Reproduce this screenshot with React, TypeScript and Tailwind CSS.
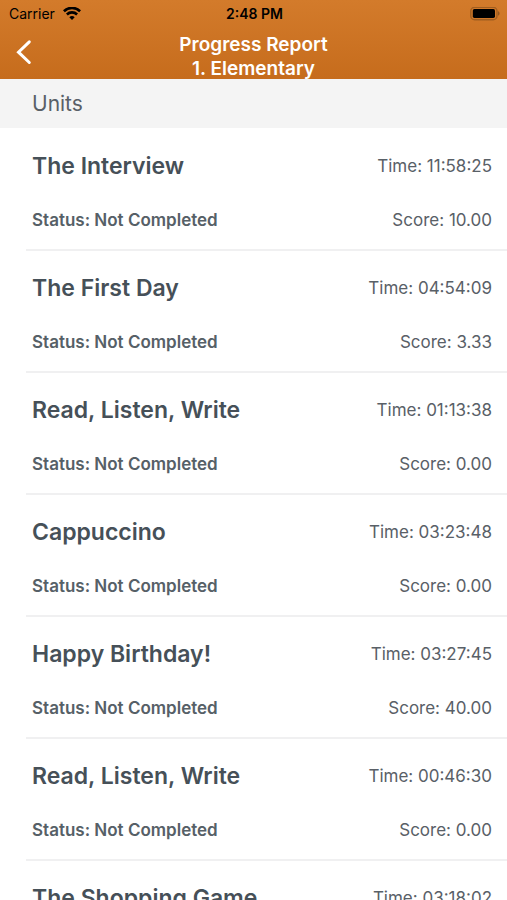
type Unit = { id: number; title: string; time: string; score: string };

const units: Unit[] = [
  { id: 1, title: "The Interview", time: "11:58:25", score: "10.00" },
  { id: 2, title: "The First Day", time: "04:54:09", score: "3.33" },
  { id: 3, title: "Read, Listen, Write", time: "01:13:38", score: "0.00" },
  { id: 4, title: "Cappuccino", time: "03:23:48", score: "0.00" },
  { id: 5, title: "Happy Birthday!", time: "03:27:45", score: "40.00" },
  { id: 6, title: "Read, Listen, Write", time: "00:46:30", score: "0.00" },
  { id: 7, title: "The Shopping Game", time: "03:18:02", score: "0.00" },
];

function StatusBar() {
  return (
    <div className="grid h-7 grid-cols-3 items-center pl-[9px] pr-[7px] text-sm text-black">
      <div className="flex items-center gap-2">
        <span>Carrier</span>
        <svg className="h-[14px] w-[18px]" viewBox="0 0 18 14" fill="none" stroke="currentColor" strokeWidth="2.6" aria-hidden="true">
          <path d="M0.9 4.2a11.6 11.6 0 0 1 16.2 0" />
          <path d="M3.9 7.5a7.3 7.3 0 0 1 10.2 0" />
          <path d="M9 12.9 6.3 10.2a3.9 3.9 0 0 1 5.4 0Z" fill="currentColor" stroke="none" />
        </svg>
      </div>
      <span className="text-center font-semibold">2:48 PM</span>
      <svg className="h-[14px] w-[30px] justify-self-end" viewBox="0 0 30 14" aria-hidden="true">
        <rect x="0.8" y="0.3" width="26.2" height="12.4" rx="3.8" fill="none" stroke="#a05e20" strokeWidth="1.4" />
        <rect x="2.8" y="2.1" width="22.2" height="8.8" rx="1.6" fill="#000" />
        <path d="M28.1 4.3c1.9.7 1.9 3.7 0 4.4Z" fill="#8a5220" />
      </svg>
    </div>
  );
}

function UnitRow({ unit }: { unit: Unit }) {
  return (
    <li className="ml-[26px] border-b-2 border-[#f0f0f1] pb-[17px] pl-[6px] pr-[15px] pt-[21px]">
      <div className="flex items-center justify-between">
        <h3 className="text-[23px] leading-8 font-semibold text-[#465058]">{unit.title}</h3>
        <span className="text-[17px] leading-8 text-[#596067]">Time: {unit.time}</span>
      </div>
      <div className="mt-[26px] flex items-center justify-between text-[17px] leading-6">
        <span className="font-semibold text-[#566067]">Status: Not Completed</span>
        <span className="text-[#596067]">Score: {unit.score}</span>
      </div>
    </li>
  );
}

export default function App() {
  return (
    <div className="flex h-screen flex-col bg-white font-['Inter',sans-serif]">
      <header className="shrink-0 bg-linear-to-b from-[#d37b2b] to-[#c66c1c]">
        <StatusBar />
        <div className="grid h-[51px] grid-cols-[56px_1fr_56px] items-start">
          <button type="button" aria-label="Back" className="flex h-12 items-center pl-[15px] text-white">
            <svg className="h-7 w-[18px]" viewBox="0 0 18 28" fill="none" stroke="currentColor" strokeWidth="3" strokeLinecap="round" aria-hidden="true">
              <path d="M14.3 3.8 3.5 14.2l10.8 10.3" strokeLinejoin="miter" />
            </svg>
          </button>
          <h1 className="pt-[5px] text-center text-[19px] leading-6 font-semibold text-white">
            Progress Report
            <br />
            1. Elementary
          </h1>
        </div>
      </header>
      <main className="min-h-0 flex-1 overflow-y-auto [scrollbar-width:none]">
        <h2 className="bg-[#f4f4f4] pl-8 text-[21px] leading-[49px] text-[#596067]">Units</h2>
        <ul className="pt-px">
          {units.map((unit) => (
            <UnitRow key={unit.id} unit={unit} />
          ))}
        </ul>
      </main>
    </div>
  );
}
